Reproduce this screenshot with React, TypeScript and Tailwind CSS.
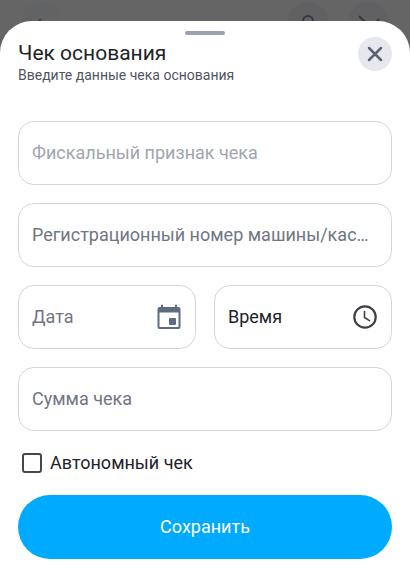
import { useId, useState } from "react";
import type { ReactNode } from "react";
import { clsx } from "clsx";

interface FieldProps {
  label: string;
  tone?: "faded" | "muted" | "dark";
  icon?: ReactNode;
}

function Field({ label, tone = "muted", icon }: FieldProps) {
  const id = useId();
  const [value, setValue] = useState("");

  return (
    <div className="flex h-16 min-w-0 items-center gap-2 rounded-2xl border border-[#d6d6d8] pr-3.5 pl-[13px]">
      {/* label and input share one grid cell, the label steps aside once there is a value */}
      <div className="grid h-full min-w-0 flex-1 items-center text-lg">
        <label
          htmlFor={id}
          className={clsx(
            "col-start-1 row-start-1 whitespace-nowrap",
            tone === "faded" && "text-[#a0a5ae]",
            tone === "muted" && "text-[#6f7682]",
            tone === "dark" && "text-[#212328]",
            value && "invisible",
          )}
        >
          {label}
        </label>
        <input
          id={id}
          type="text"
          value={value}
          onChange={(e) => setValue(e.target.value)}
          className="col-start-1 row-start-1 h-full w-full min-w-0 bg-transparent text-[#212328] outline-none"
        />
      </div>
      {icon}
    </div>
  );
}

function CalendarIcon() {
  return (
    <svg viewBox="0 0 24 26" className="h-[26px] w-6 fill-[#5f6b80]" aria-hidden>
      <path
        fillRule="evenodd"
        d="M4 1.500a1 1 0 0 1 2 0V3h12V1.500a1 1 0 0 1 2 0V3h1.500a2 2 0 0 1 2 2v18a2 2 0 0 1-2 2h-19a2 2 0 0 1-2-2V5a2 2 0 0 1 2-2H4V1.500ZM2.500 8.500V23h19V8.500h-19Z"
      />
      <rect x="12" y="14" width="7" height="7" rx="1" />
    </svg>
  );
}

function ClockIcon() {
  return (
    <svg
      viewBox="0 0 24 24"
      className="size-6 fill-none stroke-[#414246]"
      strokeLinecap="round"
      strokeLinejoin="round"
      aria-hidden
    >
      <circle cx="12" cy="12" r="10.700" strokeWidth="2.200" />
      <path d="M11.500 6.500v6l5 3.200" strokeWidth="1.600" />
    </svg>
  );
}

export default function App() {
  const [offline, setOffline] = useState(false);

  return (
    <div className="min-h-screen bg-[#656565] font-['Roboto','Noto_Sans',sans-serif]">
      {/* page header, dimmed behind the sheet */}
      <div className="flex h-[42px] items-start gap-5 px-[22px] pt-0.5" aria-hidden>
        <div className="flex size-10 items-center justify-center rounded-full bg-[#626365]">
          <svg viewBox="0 0 24 24" className="size-6 fill-none stroke-[#3f4147] stroke-2">
            <path d="m11 9-6 6" />
          </svg>
        </div>
        <div className="flex-1" />
        <div className="flex size-10 items-center justify-center rounded-full bg-[#616163]">
          <svg viewBox="0 0 24 24" className="size-6 fill-none stroke-[#36383e] stroke-2">
            <circle cx="12" cy="11" r="5" />
          </svg>
        </div>
        <div className="flex size-10 items-center justify-center rounded-full bg-[#616163]">
          <svg viewBox="0 0 24 24" className="size-6 fill-none stroke-[#36383e] stroke-2">
            <path d="m3 6 6 6M23 9l-2 2" />
          </svg>
        </div>
      </div>

      <div
        role="dialog"
        aria-labelledby="sheet-title"
        className="relative -mt-[21px] rounded-t-[32px] bg-white px-[18px] pt-2.5 pb-3"
      >
        <div className="mx-auto h-1 w-10 rounded-full bg-[#9ba1b2]" />

        <div className="flex items-start justify-between pt-0.5">
          <div>
            <h1 id="sheet-title" className="pt-0.5 text-[21px] leading-7 text-[#212328]">
              Чек основания
            </h1>
            <p className="text-sm leading-4 text-[#50555f]">Введите данные чека основания</p>
          </div>
          <button
            type="button"
            aria-label="Закрыть"
            className="flex size-[34px] items-center justify-center rounded-full bg-[#e6e8ee]"
          >
            <svg
              viewBox="0 0 16 16"
              className="size-4 fill-none stroke-[#5d6377] stroke-[2.5]"
              strokeLinecap="round"
              aria-hidden
            >
              <path d="m2 2 12 12M14 2 2 14" />
            </svg>
          </button>
        </div>

        <form className="flex flex-col gap-[18px] pt-[38px]" onSubmit={(e) => e.preventDefault()}>
          <Field label="Фискальный признак чека" tone="faded" />
          <Field label="Регистрационный номер машины/кас…" />
          <div className="grid grid-cols-2 gap-[18px]">
            <Field
              label="Дата"
              icon={
                <button type="button" aria-label="Выбрать дату">
                  <CalendarIcon />
                </button>
              }
            />
            <Field
              label="Время"
              tone="dark"
              icon={
                <button type="button" aria-label="Выбрать время">
                  <ClockIcon />
                </button>
              }
            />
          </div>
          <Field label="Сумма чека" />

          <label className="flex h-7 items-center gap-2 pl-1 text-lg text-[#212328]">
            <input
              type="checkbox"
              checked={offline}
              onChange={(e) => setOffline(e.target.checked)}
              className="size-5 appearance-none rounded-[3px] border-2 border-[#47484c] checked:bg-[#00aaff]"
            />
            Автономный чек
          </label>

          <button type="submit" className="h-16 rounded-full bg-[#00aaff] text-lg text-white">
            Сохранить
          </button>
        </form>
      </div>
    </div>
  );
}
